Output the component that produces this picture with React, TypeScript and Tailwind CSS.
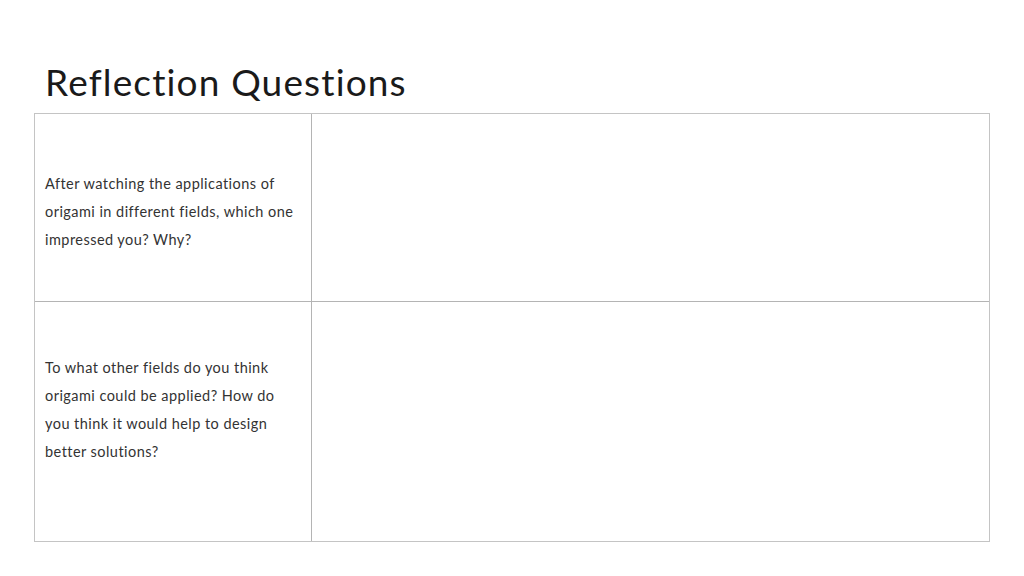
export default function App() {
  return (
    <div className="w-[1024px] h-[576px] bg-white overflow-hidden" style={{ fontFamily: 'Lato, "Open Sans", sans-serif' }}>
      <h1 className="pl-[45px] pt-[60px] h-[113px] text-[37px] leading-[44px] tracking-[1.15px] text-[#1a1a1a] font-normal">Reflection Questions</h1>
      <div className="ml-[34px] w-[956px] border-[1.5px] border-[#c4c4c4] grid grid-cols-[277px_1fr] grid-rows-[188px_239px]">
        <div className="border-r-[1.5px] border-b-[1.5px] border-[#b4b4b4] pl-[10px] pt-[56px] text-[14.5px] leading-[28px] tracking-[0.45px] text-[#333]">
          After watching the applications of<br />origami in different fields, which one<br />impressed you? Why?
        </div>
        <div className="border-b-[1.5px] border-[#b4b4b4]" />
        <div className="border-r-[1.5px] border-[#b4b4b4] pl-[10px] pt-[52px] text-[14.5px] leading-[28px] tracking-[0.45px] text-[#333]">
          To what other fields do you think<br />origami could be applied? How do<br />you think it would help to design<br />better solutions?
        </div>
        <div />
      </div>
    </div>
  );
}
